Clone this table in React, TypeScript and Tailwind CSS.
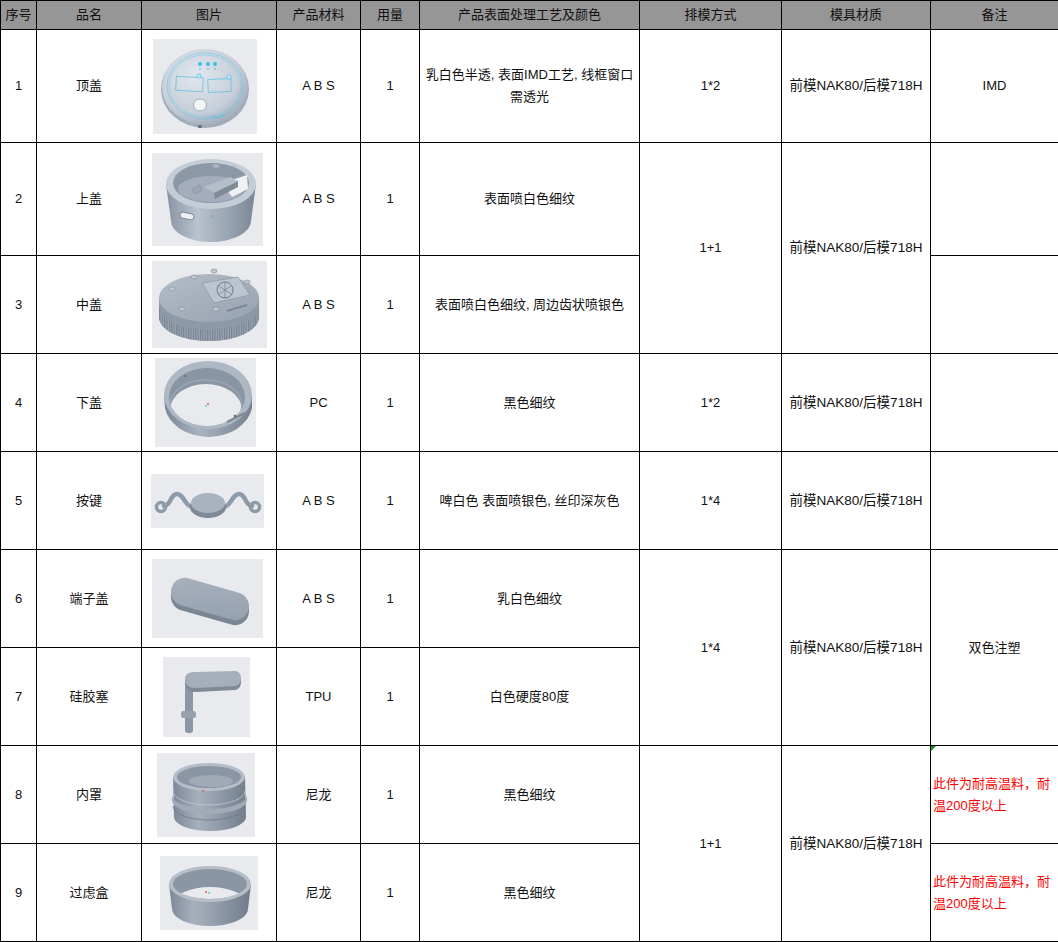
import React from 'react';

const BG = '#e9eaee';

function Pic1() {
  return (
    <svg width="104" height="95" viewBox="0 0 104 95">
      <defs>
        <radialGradient id="p1g" cx="40%" cy="35%" r="70%">
          <stop offset="0" stopColor="#e2e7ee" />
          <stop offset="0.7" stopColor="#c6ced9" />
          <stop offset="1" stopColor="#9ca7b6" />
        </radialGradient>
      </defs>
      <rect width="104" height="95" fill={BG} />
      <ellipse cx="52" cy="50" rx="44" ry="39" fill="#a1acba" />
      <ellipse cx="52" cy="48" rx="43" ry="38" fill="url(#p1g)" />
      <ellipse cx="52" cy="47" rx="38" ry="33" fill="none" stroke="#52c4e2" strokeWidth="0.5" />
      <ellipse cx="52" cy="47" rx="36" ry="31" fill="none" stroke="#52c4e2" strokeWidth="0.4" />
      <rect x="23" y="38" width="27" height="14" fill="none" stroke="#3fb8da" strokeWidth="0.6" transform="rotate(3 36 45)" />
      <rect x="55" y="40" width="23" height="13" fill="none" stroke="#3fb8da" strokeWidth="0.6" transform="rotate(-3 66 46)" />
      <circle cx="46" cy="37" r="2.2" fill="#bfe9f5" stroke="#3fb8da" strokeWidth="0.6" />
      <circle cx="76" cy="38" r="2.2" fill="#bfe9f5" stroke="#3fb8da" strokeWidth="0.6" />
      <circle cx="47" cy="25" r="2" fill="#38c0e6" />
      <circle cx="55" cy="25" r="2" fill="#38c0e6" />
      <circle cx="62" cy="25" r="2" fill="#38c0e6" />
      <circle cx="47" cy="30" r="0.8" fill="#38c0e6" />
      <circle cx="55" cy="30" r="0.8" fill="#38c0e6" />
      <circle cx="62" cy="30" r="0.8" fill="#38c0e6" />
      <ellipse cx="47" cy="66" rx="6.5" ry="6" fill="#f5f6f8" stroke="#97a2b0" strokeWidth="0.8" />
      <path d="M58,78 Q66,80 72,76" fill="none" stroke="#3fb8da" strokeWidth="0.6" />
      <rect x="45" y="86" width="4" height="3" fill="#6d7886" />
    </svg>
  );
}

function Pic2() {
  return (
    <svg width="111" height="93" viewBox="0 0 111 93">
      <defs>
        <linearGradient id="p2g" x1="0" x2="1" y1="0" y2="0">
          <stop offset="0" stopColor="#8893a2" />
          <stop offset="0.35" stopColor="#b9c2cd" />
          <stop offset="0.7" stopColor="#99a4b2" />
          <stop offset="1" stopColor="#7a8594" />
        </linearGradient>
      </defs>
      <rect width="111" height="93" fill={BG} />
      <path d="M14,31 L19,68 A40,21 0 0 0 99,68 L104,31 Z" fill="url(#p2g)" />
      <ellipse cx="59" cy="31" rx="45" ry="25" fill="#c4ccd6" />
      <ellipse cx="59" cy="30" rx="38" ry="20" fill="#8d98a7" />
      <ellipse cx="59" cy="36" rx="33" ry="13" fill="#a3adbb" />
      <path d="M70,30 L95,22 L96,36 L80,44 Z" fill="#eef0f3" />
      <path d="M52,34 L78,24 L86,28 L62,40 Z" fill="#b4bdc8" />
      <path d="M62,40 L86,28 L86,34 L63,46 Z" fill="#7f8a99" />
      <ellipse cx="64" cy="13" rx="4" ry="2.5" fill="#aab3c0" stroke="#7d8897" strokeWidth="0.6" />
      <path d="M40,36 L48,32 L50,38 L42,41 Z" fill="#9ba6b4" stroke="#7d8897" strokeWidth="0.5" />
      <rect x="28" y="60" width="14" height="6" rx="3" fill="#eef0f3" stroke="#6f7a89" strokeWidth="0.8" transform="rotate(12 35 63)" />
      <circle cx="60" cy="63" r="0.8" fill="#2fbf5a" />
    </svg>
  );
}

function Pic3() {
  return (
    <svg width="115" height="87" viewBox="0 0 115 87">
      <defs>
        <linearGradient id="p3g" x1="0" x2="1" y1="0" y2="1">
          <stop offset="0" stopColor="#b4bdc9" />
          <stop offset="1" stopColor="#97a2b0" />
        </linearGradient>
        <pattern id="p3k" width="2.4" height="10" patternUnits="userSpaceOnUse">
          <rect width="2.4" height="10" fill="#9aa5b3" />
          <rect width="1.1" height="10" fill="#76818f" />
        </pattern>
      </defs>
      <rect width="115" height="87" fill={BG} />
      <path d="M7,37 L7,56 A50,24 0 0 0 107,56 L107,37 Z" fill="#8e99a8" />
      <path d="M7,45 L7,56 A50,24 0 0 0 107,56 L107,45 A50,24 0 0 1 7,45 Z" fill="url(#p3k)" />
      <ellipse cx="57" cy="37" rx="50" ry="24" fill="url(#p3g)" />
      <path d="M50,22 L86,16 L98,34 L62,42 Z" fill="#bcc4cf" stroke="#8a95a4" strokeWidth="0.7" />
      <circle cx="73" cy="29" r="8" fill="none" stroke="#6f7a89" strokeWidth="1" />
      <path d="M67,25 L79,33 M79,25 L67,33 M73,21 L73,37" stroke="#7a8594" strokeWidth="0.8" />
      <ellipse cx="20" cy="28" rx="3" ry="2" fill="#c0c8d2" stroke="#7d8897" strokeWidth="0.6" />
      <ellipse cx="42" cy="16" rx="3" ry="2" fill="#c0c8d2" stroke="#7d8897" strokeWidth="0.6" />
      <ellipse cx="62" cy="10" rx="3" ry="2" fill="#c0c8d2" stroke="#7d8897" strokeWidth="0.6" />
      <ellipse cx="95" cy="21" rx="3" ry="2" fill="#c0c8d2" stroke="#7d8897" strokeWidth="0.6" />
      <ellipse cx="64" cy="48" rx="3" ry="2" fill="#c0c8d2" stroke="#7d8897" strokeWidth="0.6" />
      <ellipse cx="30" cy="48" rx="3" ry="2" fill="#c0c8d2" stroke="#7d8897" strokeWidth="0.6" />
      <path d="M75,50 L95,44" stroke="#7d8897" strokeWidth="2" />
    </svg>
  );
}

function Pic4() {
  return (
    <svg width="101" height="89" viewBox="0 0 101 89">
      <defs>
        <linearGradient id="p4g" x1="0" x2="1" y1="0" y2="0">
          <stop offset="0" stopColor="#7b8695" />
          <stop offset="0.4" stopColor="#a9b3c0" />
          <stop offset="1" stopColor="#76818f" />
        </linearGradient>
        <clipPath id="p4c">
          <ellipse cx="52" cy="39" rx="38" ry="29" />
        </clipPath>
      </defs>
      <rect width="101" height="89" fill={BG} />
      <path d="M9,37 L10,50 A44,34 0 0 0 97,50 L97,37 Z" fill="url(#p4g)" />
      <ellipse cx="53" cy="37" rx="44" ry="34" fill="#aeb8c4" />
      <ellipse cx="52" cy="39" rx="38" ry="29" fill="#8a95a4" />
      <ellipse cx="51" cy="52" rx="36" ry="26" fill={BG} clipPath="url(#p4c)" />
      <ellipse cx="51" cy="47" rx="36" ry="25" fill="none" stroke="#9aa5b3" strokeWidth="1.5" clipPath="url(#p4c)" />
      <circle cx="30" cy="18" r="1" fill="#5d6876" />
      <circle cx="80" cy="58" r="1.3" fill="#5d6876" />
      <path d="M72,64 L90,55" stroke="#7d8897" strokeWidth="2" />
      <circle cx="53" cy="46" r="1" fill="#e05a5a" />
      <circle cx="51" cy="48" r="1" fill="#5ac7e0" />
    </svg>
  );
}

function Pic5() {
  return (
    <svg width="113" height="54" viewBox="0 0 113 54">
      <rect width="113" height="54" fill={BG} />
      <g fill="none" stroke="#8f9aa9" strokeWidth="4.5" strokeLinecap="round">
        <path d="M42,33 C34,33 33,20 26,20 C19,20 20,32 13,32" />
        <path d="M72,33 C80,33 81,20 88,20 C95,20 94,32 101,32" />
        <circle cx="10" cy="33" r="4.5" strokeWidth="3.5" />
        <circle cx="104" cy="33" r="4.5" strokeWidth="3.5" />
      </g>
      <ellipse cx="57" cy="33" rx="18" ry="11" fill="#7f8a99" />
      <ellipse cx="57" cy="29" rx="17" ry="10" fill="#a9b3c0" />
    </svg>
  );
}

function Pic6() {
  return (
    <svg width="111" height="79" viewBox="0 0 111 79">
      <defs>
        <linearGradient id="p6g" x1="0" x2="1" y1="0" y2="1">
          <stop offset="0" stopColor="#a7b1be" />
          <stop offset="1" stopColor="#95a0ae" />
        </linearGradient>
      </defs>
      <rect width="111" height="79" fill={BG} />
      <g transform="translate(0,5)">
        <rect x="18" y="26" width="80" height="28" rx="14" fill="#7b8694" transform="rotate(16 58 40)" />
      </g>
      <rect x="18" y="26" width="80" height="28" rx="14" fill="url(#p6g)" transform="rotate(16 58 40)" />
    </svg>
  );
}

function Pic7() {
  return (
    <svg width="87" height="80" viewBox="0 0 87 80">
      <rect width="87" height="80" fill={BG} />
      <rect x="22" y="28" width="8" height="48" rx="3" fill="#8c97a6" />
      <rect x="18" y="54" width="15" height="7" rx="2.5" fill="#97a2b0" />
      <path d="M22,26 C22,20 27,19 33,19 L72,18 C80,18 80,32 72,33 L33,35 C26,35 22,32 22,26 Z" fill="#7f8a99" />
      <path d="M22,22 C22,16 27,15 33,15 L72,14 C80,14 80,28 72,29 L33,31 C26,31 22,28 22,22 Z" fill="#a5afbc" />
    </svg>
  );
}

function Pic8() {
  return (
    <svg width="98" height="84" viewBox="0 0 98 84">
      <defs>
        <linearGradient id="p8g" x1="0" x2="1" y1="0" y2="0">
          <stop offset="0" stopColor="#7e8998" />
          <stop offset="0.35" stopColor="#a6b0bd" />
          <stop offset="1" stopColor="#737e8d" />
        </linearGradient>
      </defs>
      <rect width="98" height="84" fill={BG} />
      <path d="M16,24 L17,64 A36,14 0 0 0 89,64 L88,24 Z" fill="url(#p8g)" />
      <path d="M15,42 A37,14 0 0 0 90,42 L90,47 A37,14 0 0 1 15,47 Z" fill="#a1abb8" />
      <path d="M16,38 A36,14 0 0 0 88,38" fill="none" stroke="#c0c8d2" strokeWidth="0.8" />
      <path d="M16,53 A36,14 0 0 0 88,53" fill="none" stroke="#6f7a89" strokeWidth="0.8" />
      <ellipse cx="52" cy="24" rx="36" ry="14" fill="#b4bdc8" />
      <ellipse cx="52" cy="24" rx="32" ry="11" fill="#8b96a5" />
      <ellipse cx="54" cy="28" rx="22" ry="6" fill="#a0aab7" />
      <circle cx="46" cy="38" r="0.9" fill="#e05a5a" />
    </svg>
  );
}

function Pic9() {
  return (
    <svg width="98" height="74" viewBox="0 0 98 74">
      <defs>
        <linearGradient id="p9g" x1="0" x2="1" y1="0" y2="0">
          <stop offset="0" stopColor="#7c8796" />
          <stop offset="0.3" stopColor="#a7b1be" />
          <stop offset="1" stopColor="#717c8b" />
        </linearGradient>
        <clipPath id="p9c">
          <ellipse cx="50" cy="28" rx="37" ry="15" />
        </clipPath>
      </defs>
      <rect width="98" height="74" fill={BG} />
      <path d="M9,28 L12,53 A38,17 0 0 0 88,53 L91,28 Z" fill="url(#p9g)" />
      <ellipse cx="50" cy="28" rx="41" ry="18" fill="#b5bec9" />
      <ellipse cx="50" cy="28" rx="37" ry="15" fill="#8b96a5" />
      <ellipse cx="50" cy="46" rx="35" ry="15" fill={BG} clipPath="url(#p9c)" />
      <circle cx="46" cy="36" r="1" fill="#e05a5a" />
      <circle cx="49" cy="37" r="1" fill="#5ac7e0" />
    </svg>
  );
}

const cell = 'border border-black text-center align-middle px-[2px] leading-[22px]';
const head = 'border border-black text-center align-middle bg-[#969696] font-normal';
const mold = `${cell} text-[13.5px]`;
const nak = '前模NAK80/后模718H';

export default function App() {
  return (
    <div className="bg-white w-[1058px] h-[942px] overflow-hidden font-['Liberation_Sans','Noto_Sans_CJK_SC',sans-serif] text-[13px] text-[#111]">
      <table className="border-collapse table-fixed w-[1058px]">
        <colgroup>
          <col className="w-[36px]" />
          <col className="w-[105px]" />
          <col className="w-[135px]" />
          <col className="w-[84px]" />
          <col className="w-[59px]" />
          <col className="w-[220px]" />
          <col className="w-[142px]" />
          <col className="w-[149px]" />
          <col className="w-[128px]" />
        </colgroup>
        <thead>
          <tr className="h-[29px]">
            <th className={head}>序号</th>
            <th className={head}>品名</th>
            <th className={head}>图片</th>
            <th className={head}>产品材料</th>
            <th className={head}>用量</th>
            <th className={head}>产品表面处理工艺及颜色</th>
            <th className={head}>排模方式</th>
            <th className={head}>模具材质</th>
            <th className={head}>备注</th>
          </tr>
        </thead>
        <tbody>
          <tr className="h-[113px]">
            <td className={cell}>1</td>
            <td className={cell}>顶盖</td>
            <td className={cell}><div className="flex justify-center pr-[8px]"><Pic1 /></div></td>
            <td className={cell}>A B S</td>
            <td className={cell}>1</td>
            <td className={cell}>乳白色半透, 表面IMD工艺, 线框窗口<br />需透光</td>
            <td className={cell}>1*2</td>
            <td className={mold}>{nak}</td>
            <td className={cell}>IMD</td>
          </tr>
          <tr className="h-[113px]">
            <td className={cell}>2</td>
            <td className={cell}>上盖</td>
            <td className={cell}><div className="flex justify-center pr-[4px]"><Pic2 /></div></td>
            <td className={cell}>A B S</td>
            <td className={cell}>1</td>
            <td className={cell}>表面喷白色细纹</td>
            <td className={cell} rowSpan={2}>1+1</td>
            <td className={mold} rowSpan={2}>{nak}</td>
            <td className={cell}></td>
          </tr>
          <tr className="h-[98px]">
            <td className={cell}>3</td>
            <td className={cell}>中盖</td>
            <td className={cell}><div className="flex justify-center"><Pic3 /></div></td>
            <td className={cell}>A B S</td>
            <td className={cell}>1</td>
            <td className={cell}>表面喷白色细纹, 周边齿状喷银色</td>
            <td className={cell}></td>
          </tr>
          <tr className="h-[98px]">
            <td className={cell}>4</td>
            <td className={cell}>下盖</td>
            <td className={cell}><div className="flex justify-center pr-[8px]"><Pic4 /></div></td>
            <td className={cell}>PC</td>
            <td className={cell}>1</td>
            <td className={cell}>黑色细纹</td>
            <td className={cell}>1*2</td>
            <td className={mold}>{nak}</td>
            <td className={cell}></td>
          </tr>
          <tr className="h-[98px]">
            <td className={cell}>5</td>
            <td className={cell}>按键</td>
            <td className={cell}><div className="flex justify-center pr-[4px]"><Pic5 /></div></td>
            <td className={cell}>A B S</td>
            <td className={cell}>1</td>
            <td className={cell}>啤白色 表面喷银色, 丝印深灰色</td>
            <td className={cell}>1*4</td>
            <td className={mold}>{nak}</td>
            <td className={cell}></td>
          </tr>
          <tr className="h-[98px]">
            <td className={cell}>6</td>
            <td className={cell}>端子盖</td>
            <td className={cell}><div className="flex justify-center pr-[4px]"><Pic6 /></div></td>
            <td className={cell}>A B S</td>
            <td className={cell}>1</td>
            <td className={cell}>乳白色细纹</td>
            <td className={cell} rowSpan={2}>1*4</td>
            <td className={mold} rowSpan={2}>{nak}</td>
            <td className={cell} rowSpan={2}>双色注塑</td>
          </tr>
          <tr className="h-[98px]">
            <td className={cell}>7</td>
            <td className={cell}>硅胶塞</td>
            <td className={cell}><div className="flex justify-center pr-[6px]"><Pic7 /></div></td>
            <td className={cell}>TPU</td>
            <td className={cell}>1</td>
            <td className={cell}>白色硬度80度</td>
          </tr>
          <tr className="h-[98px]">
            <td className={cell}>8</td>
            <td className={cell}>内罩</td>
            <td className={cell}><div className="flex justify-center pr-[6px]"><Pic8 /></div></td>
            <td className={cell}>尼龙</td>
            <td className={cell}>1</td>
            <td className={cell}>黑色细纹</td>
            <td className={cell} rowSpan={2}>1+1</td>
            <td className={mold} rowSpan={2}>{nak}</td>
            <td className={`${cell} relative text-left text-[#ff0000]`}>
              <span className="absolute left-0 top-0 w-0 h-0 border-t-[5px] border-r-[5px] border-t-[#1a8c1a] border-r-transparent" />
              此件为耐高温料，耐<br />温200度以上
            </td>
          </tr>
          <tr className="h-[98px]">
            <td className={cell}>9</td>
            <td className={cell}>过虑盒</td>
            <td className={cell}><div className="flex justify-center"><Pic9 /></div></td>
            <td className={cell}>尼龙</td>
            <td className={cell}>1</td>
            <td className={cell}>黑色细纹</td>
            <td className={`${cell} text-left text-[#ff0000]`}>此件为耐高温料，耐<br />温200度以上</td>
          </tr>
        </tbody>
      </table>
    </div>
  );
}
